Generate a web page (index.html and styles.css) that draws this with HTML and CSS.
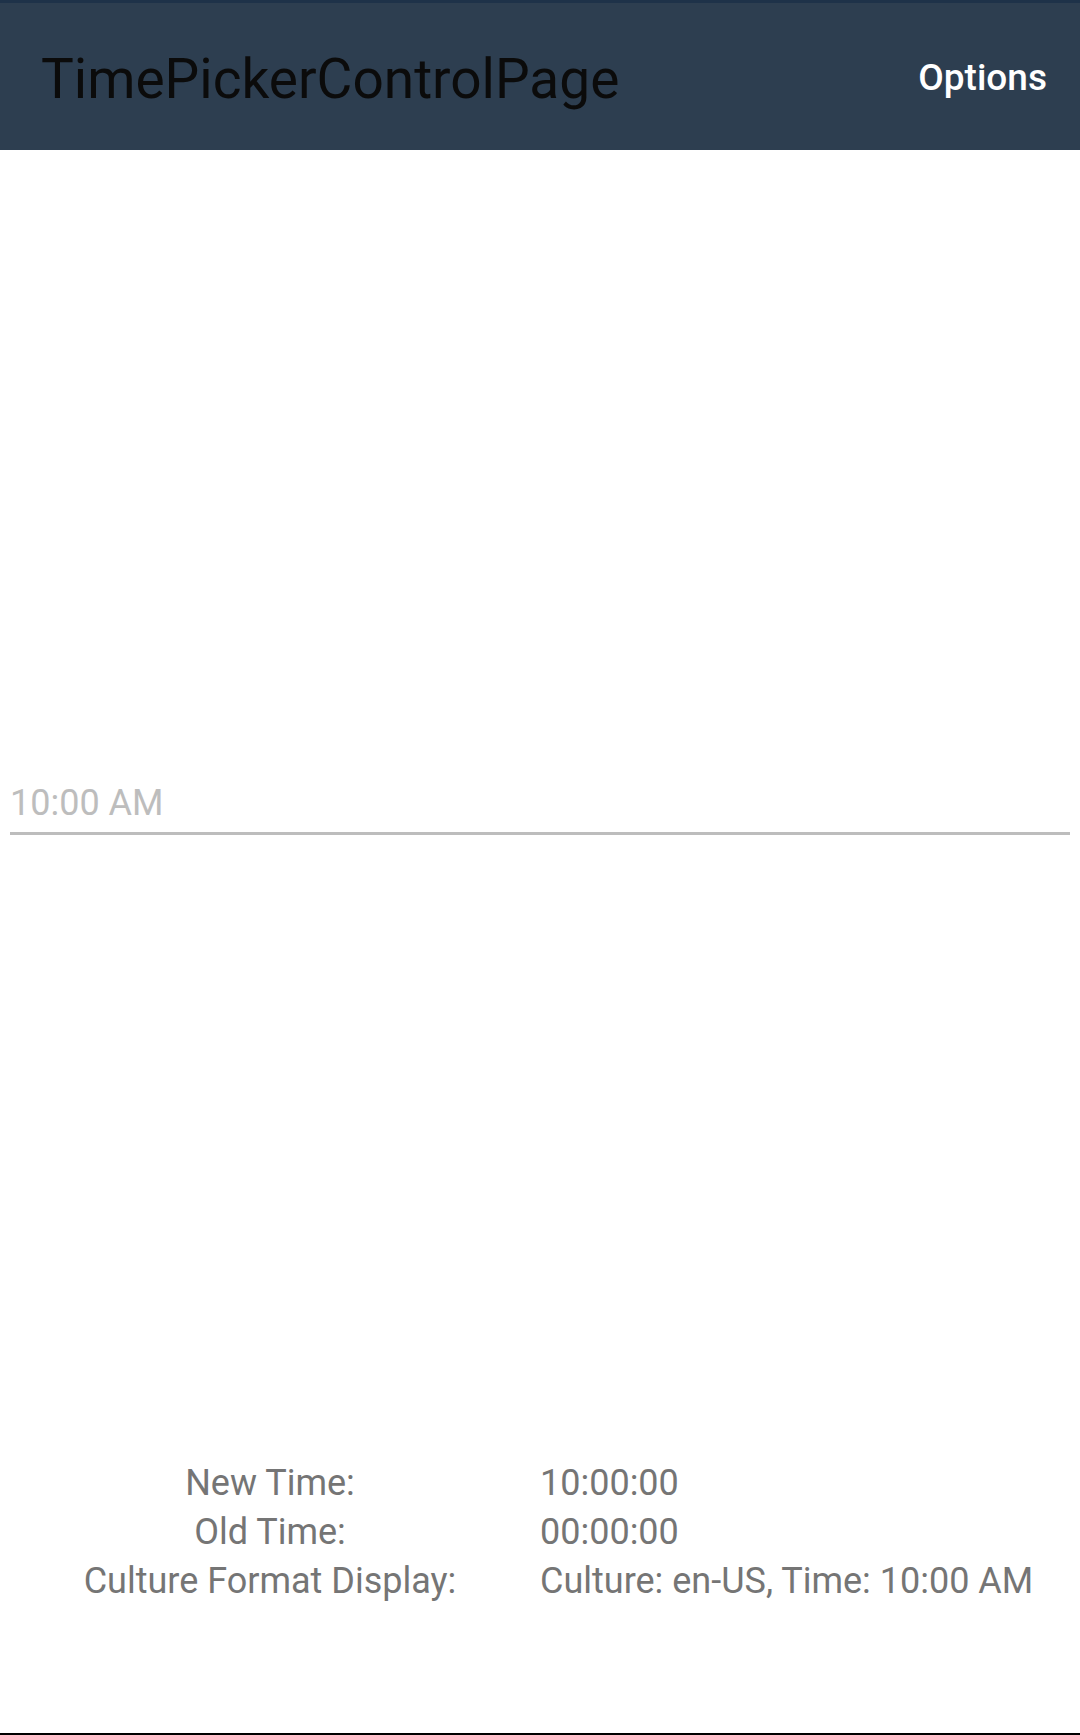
FILE: index.html
```html
<!DOCTYPE html>
<html>
<head>
<meta charset="utf-8">
<link rel="stylesheet" href="styles.css">
</head>
<body>
<div class="screen">
  <header class="toolbar">
    <div class="title">TimePickerControlPage</div>
    <div class="action">Options</div>
  </header>
  <main class="content">
    <div class="picker">10:00 AM</div>
    <div class="info">
      <div class="label">New Time:</div>
      <div class="value">10:00:00</div>
      <div class="label">Old Time:</div>
      <div class="value">00:00:00</div>
      <div class="label">Culture Format Display:</div>
      <div class="value">Culture: en-US, Time: 10:00 AM</div>
    </div>
  </main>
  <div class="navedge"></div>
</div>
</body>
</html>
```

FILE: styles.css
```css
html, body {
  margin: 0;
  padding: 0;
  background: #ffffff;
}
body {
  font-family: Roboto, "Liberation Sans", sans-serif;
}
.screen {
  width: 1080px;
  height: 1735px;
  display: flex;
  flex-direction: column;
  overflow: hidden;
}
.toolbar {
  height: 147px;
  border-top: 3px solid #1e3249;
  background: #2d3e50;
  display: flex;
  justify-content: space-between;
  align-items: flex-start;
  padding: 0 33px 0 41px;
  flex: none;
}
.title {
  margin-top: 44px;
  font-size: 55px;
  color: #0b0b0b;
  line-height: 65px;
}
.action {
  margin-top: 54px;
  font-size: 37px;
  font-weight: 500;
  color: #ffffff;
  line-height: 41px;
}
.content {
  flex: 1;
  display: flex;
  flex-direction: column;
}
.picker {
  margin: 632px 10px 0 10px;
  font-size: 36px;
  line-height: 42px;
  color: #bdbdbd;
  padding: 0 0 8px 0;
  border-bottom: 3px solid #bdbdbd;
}
.info {
  margin-top: 624px;
  display: grid;
  grid-template-columns: 540px 540px;
  font-size: 36px;
  line-height: 49px;
  color: #757575;
}
.label {
  text-align: center;
}
.value {
  text-align: left;
}
.navedge {
  height: 2px;
  background: #000000;
  flex: none;
}
```
